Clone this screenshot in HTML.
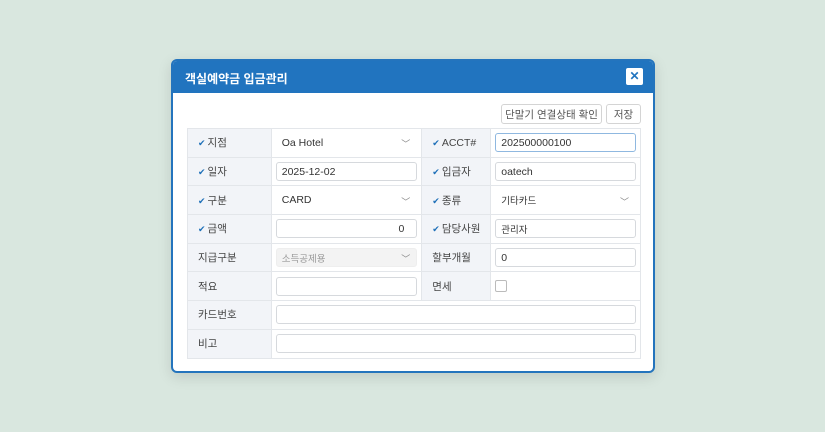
<!DOCTYPE html>
<html><head><meta charset="utf-8"><style>
*{box-sizing:border-box;margin:0;padding:0}
body{width:825px;height:432px;background:#d9e7df;font-family:"Liberation Sans","Noto Sans CJK KR",sans-serif;font-size:10.5px;color:#333;position:relative;overflow:hidden}
.dlg{position:absolute;left:171px;top:59px;width:484px;height:314px;background:#fff;border:2px solid #2474bd;border-radius:6px;overflow:hidden;box-shadow:0 4px 14px rgba(0,0,0,.12)}
.hd{height:32px;background:#2174bf;color:#fff;font-size:12px;font-weight:bold;padding:9px 0 0 12px;position:relative}
.x{position:absolute;right:10px;top:7px;width:17px;height:17px;background:#fff;border-radius:2px;color:#2174bf;font-size:12px;text-align:center;line-height:17px;font-weight:bold}
.btn{position:absolute;top:43px;height:20px;border:1px solid #d4d4d4;border-radius:3px;background:#fff;font-size:10.5px;color:#555;display:flex;align-items:center;justify-content:center}
table{position:absolute;left:14px;top:67px;width:454px;border-collapse:collapse}
td{border:1px solid #e3e6ea;height:28.7px;padding:0 4px;vertical-align:middle}
td.l{background:#f2f4f8;padding-left:10px;color:#444}
.c{color:#1d6fb8;font-size:9px;margin-right:2px}
.in,.sel{height:19px;border:1px solid #d6d9dd;border-radius:3px;padding:0 5px;position:relative;background:#fff;display:flex;align-items:center}
.sel{border-color:transparent}
.ar{position:absolute;right:6px;top:3px;color:#888;font-size:9px}
</style></head><body>
<div class="dlg">
<div class="hd">객실예약금 입금관리<div class="x">✕</div></div>
<div class="btn" style="left:328px;width:101px">단말기 연결상태 확인</div>
<div class="btn" style="left:433px;width:35px">저장</div>
<table>
<colgroup><col style="width:84px"><col style="width:151px"><col style="width:69px"><col style="width:150px"></colgroup>
<tr><td class="l"><span class="c">✔</span>지점</td><td><div class="sel">Oa Hotel<span class="ar">﹀</span></div></td><td class="l"><span class="c">✔</span>ACCT#</td><td><div class="in" style="border-color:#8fb8e0">202500000100</div></td></tr>
<tr><td class="l"><span class="c">✔</span>일자</td><td><div class="in">2025-12-02</div></td><td class="l"><span class="c">✔</span>입금자</td><td><div class="in">oatech</div></td></tr>
<tr><td class="l"><span class="c">✔</span>구분</td><td><div class="sel">CARD<span class="ar">﹀</span></div></td><td class="l"><span class="c">✔</span>종류</td><td><div class="sel" style="font-size:9.5px">기타카드<span class="ar">﹀</span></div></td></tr>
<tr><td class="l"><span class="c">✔</span>금액</td><td><div class="in" style="justify-content:flex-end;padding-right:12px">0</div></td><td class="l"><span class="c">✔</span>담당사원</td><td><div class="in" style="font-size:9.5px">관리자</div></td></tr>
<tr><td class="l">지급구분</td><td><div class="in" style="background:#f3f3f3;border-color:#eee;color:#999;font-size:9.5px">소득공제용<span class="ar">﹀</span></div></td><td class="l">할부개월</td><td><div class="in">0</div></td></tr>
<tr><td class="l">적요</td><td><div class="in"></div></td><td class="l">면세</td><td><div style="width:12px;height:12px;border:1px solid #bbb;border-radius:2px"></div></td></tr>
<tr><td class="l">카드번호</td><td colspan="3"><div class="in"></div></td></tr>
<tr><td class="l">비고</td><td colspan="3"><div class="in"></div></td></tr>
</table>
</div>
</body></html>
